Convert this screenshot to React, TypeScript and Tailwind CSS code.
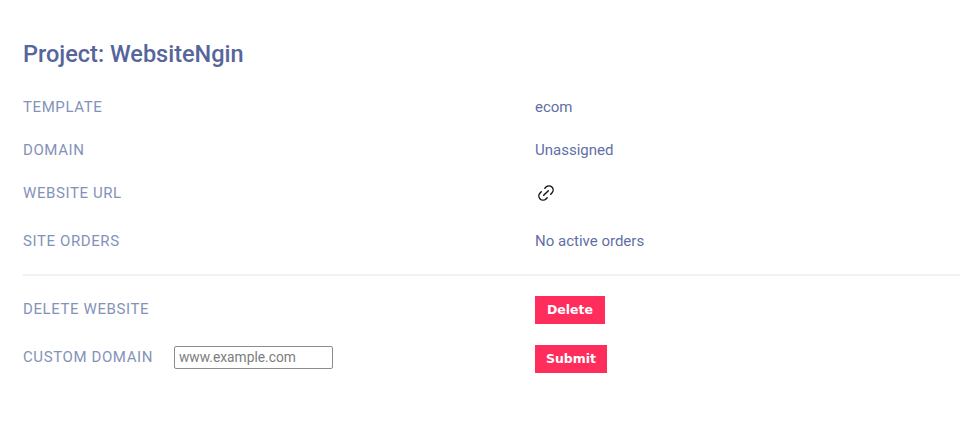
import { Link2 } from "lucide-react";

const labelClass = "w-[512px] shrink-0 text-[15px] leading-5 tracking-[0.6px] text-[#8492b9]";
const valueClass = "text-[15px] leading-5 text-[#5f6fa5]";
const buttonClass = "h-[28px] bg-[#ff2d5c] text-[12.5px] font-bold text-white font-['DejaVu_Sans',sans-serif]";

export default function App() {
  return (
    <div className="h-[427px] w-[960px] overflow-hidden bg-white pl-[23px] font-['Roboto',sans-serif]">
      <h1 className="pt-[40px] text-[23.5px] leading-[29px] font-medium text-[#56659b]">
        Project: WebsiteNgin
      </h1>

      <div className="mt-[28px] flex items-center">
        <div className={labelClass}>TEMPLATE</div>
        <div className={valueClass}>ecom</div>
      </div>
      <div className="mt-[23px] flex items-center">
        <div className={labelClass}>DOMAIN</div>
        <div className={valueClass}>Unassigned</div>
      </div>
      <div className="mt-[23px] flex items-center">
        <div className={labelClass}>WEBSITE URL</div>
        <Link2 className="ml-[1px] h-[20px] w-[20px] -rotate-45 text-[#111111]" strokeWidth={1.7} />
      </div>
      <div className="mt-[28px] flex items-center">
        <div className={labelClass}>SITE ORDERS</div>
        <div className={valueClass}>No active orders</div>
      </div>

      <div className="mt-[23px] h-[2px] bg-[#f0f1f5]" />

      <div className="mt-[20px] flex items-center">
        <div className={`${labelClass} mb-[2px]`}>DELETE WEBSITE</div>
        <button className={`${buttonClass} w-[70px]`}>Delete</button>
      </div>
      <div className="mt-[21px] flex items-center">
        <div className="mb-[4px] flex w-[512px] shrink-0 items-center">
          <div className="w-[151px] text-[15px] leading-5 tracking-[0.6px] text-[#8492b9]">CUSTOM DOMAIN</div>
          <input
            className="h-[23px] w-[159px] rounded-[2px] border border-[#8b8b90] px-[4px] font-['Roboto',sans-serif] text-[13.8px] text-[#555] placeholder:text-[#7d7d7d]"
            placeholder="www.example.com"
          />
        </div>
        <button className={`${buttonClass} w-[72px]`}>Submit</button>
      </div>
    </div>
  );
}
